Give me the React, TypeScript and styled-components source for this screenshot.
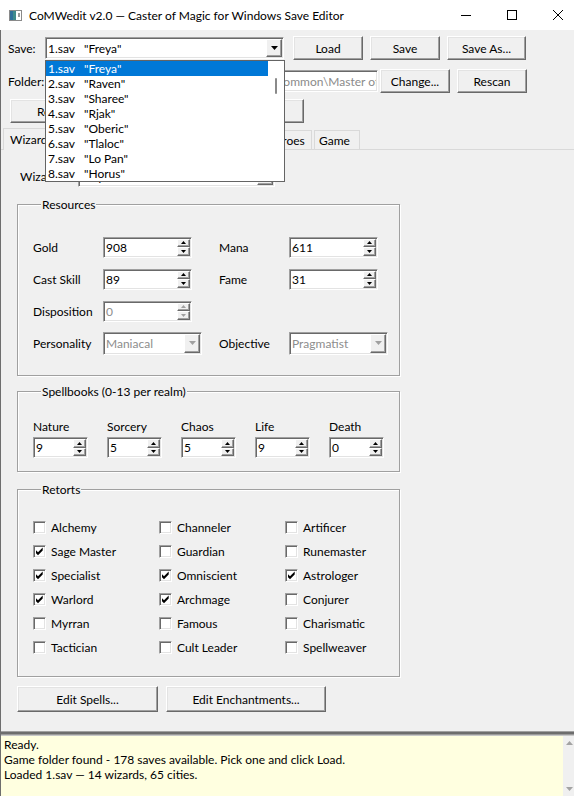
import styled, { createGlobalStyle } from "styled-components";

const UI_FONT = `Lato, "Liberation Sans", Arial, sans-serif`;

const GlobalStyle = createGlobalStyle`
  * { box-sizing: border-box; }
  html, body { margin: 0; padding: 0; }
  body {
    background: #f0f0f0;
    font-family: ${UI_FONT};
    font-size: 12px;
    color: #000;
    overflow: hidden;
  }
`;

const saves: [string, string][] = [
  ["1.sav", "Freya"],
  ["2.sav", "Raven"],
  ["3.sav", "Sharee"],
  ["4.sav", "Rjak"],
  ["5.sav", "Oberic"],
  ["6.sav", "Tlaloc"],
  ["7.sav", "Lo Pan"],
  ["8.sav", "Horus"],
];

const tabs: [string, number][] = [
  ["Wizards", 58],
  ["Cities", 46],
  ["Units", 42],
  ["Items", 42],
  ["Buildings", 59],
  ["Heroes", 50],
  ["Game", 46],
];

const realms: [string, number][] = [
  ["Nature", 9],
  ["Sorcery", 5],
  ["Chaos", 5],
  ["Life", 9],
  ["Death", 0],
];

const retorts: [string, boolean][] = [
  ["Alchemy", false], ["Channeler", false], ["Artificer", false],
  ["Sage Master", true], ["Guardian", false], ["Runemaster", false],
  ["Specialist", true], ["Omniscient", true], ["Astrologer", true],
  ["Warlord", true], ["Archmage", true], ["Conjurer", false],
  ["Myrran", false], ["Famous", false], ["Charismatic", false],
  ["Tactician", false], ["Cult Leader", false], ["Spellweaver", false],
];

const logLines = [
  "Ready.",
  "Game folder found - 178 saves available. Pick one and click Load.",
  "Loaded 1.sav — 14 wizards, 65 cities.",
];

/* small glyphs */

const ArrowUp = ({ color = "#000" }: { color?: string }) => (
  <svg width="5" height="3" viewBox="0 0 5 3">
    <path d="M0 3h5L2.5 0z" fill={color} />
  </svg>
);

const ArrowDown = ({ color = "#000", w = 5, h = 3 }: { color?: string; w?: number; h?: number }) => (
  <svg width={w} height={h} viewBox={`0 0 ${w} ${h}`}>
    <path d={`M0 0h${w}L${w / 2} ${h}z`} fill={color} />
  </svg>
);

const CheckMark = () => (
  <svg width="9" height="9" viewBox="0 0 9 9">
    <path d="M1 3.2l2 2 4.7-4.7v3L3 8.3 1 6.3z" fill="#000" />
  </svg>
);

const AppIcon = () => (
  <svg width="13" height="11" viewBox="0 0 13 11" style={{ marginLeft: 9 }}>
    <rect x="0.5" y="0.5" width="12" height="10" fill="#fff" stroke="#8a8a8a" />
    <rect x="1" y="1" width="6" height="9" fill="#3f8a8c" />
    <rect x="1" y="1" width="3" height="9" fill="#2f6f9a" />
    <rect x="9" y="3" width="2" height="4" fill="#9a9a9a" />
  </svg>
);

/* window frame */

const Window = styled.div`
  width: 574px;
  height: 796px;
  display: flex;
  flex-direction: column;
  overflow: hidden;
  background: #f0f0f0;
`;

const TitleBar = styled.div`
  height: 30px;
  flex-shrink: 0;
  display: flex;
  align-items: center;
  background: #fff;
`;

const Title = styled.span`
  margin-left: 7px;
  font-size: 12px;
  white-space: nowrap;
`;

const CaptionGroup = styled.div`
  margin-left: auto;
  margin-right: -7px;
  display: flex;
  flex-shrink: 0;
`;

const CaptionBtn = styled.div`
  width: 46px;
  height: 30px;
  display: flex;
  align-items: center;
  justify-content: center;
`;

const Body = styled.div`
  position: relative;
  flex: 1;
  display: flex;
  flex-direction: column;
  border-left: 1px solid #6e6e6e;
`;

/* toolbar rows */

const Toolbar = styled.div<{ $top: number; $left?: number }>`
  display: flex;
  align-items: center;
  height: 24px;
  margin-top: ${(p) => p.$top}px;
  padding-left: ${(p) => p.$left ?? 7}px;
`;

const FieldLabel = styled.span<{ $w: number }>`
  width: ${(p) => p.$w}px;
  flex-shrink: 0;
  white-space: nowrap;
`;

const ButtonGroup = styled.div<{ $gap: number; $left: number }>`
  display: flex;
  gap: ${(p) => p.$gap}px;
  margin-left: ${(p) => p.$left}px;
`;

const Button = styled.div<{ $w: number; $h?: number }>`
  width: ${(p) => p.$w}px;
  height: ${(p) => p.$h ?? 24}px;
  flex-shrink: 0;
  display: flex;
  align-items: center;
  justify-content: center;
  background: #f0f0f0;
  border: 1px solid;
  border-color: #fff #696969 #696969 #fff;
  box-shadow: inset -1px -1px 0 #a0a0a0, inset 1px 1px 0 #e3e3e3;
  white-space: nowrap;
`;

const Sunken = styled.div<{ $w: number; $h: number }>`
  width: ${(p) => p.$w}px;
  height: ${(p) => p.$h}px;
  flex-shrink: 0;
  display: flex;
  align-items: stretch;
  padding: 1px;
  background: #fff;
  border: 1px solid;
  border-color: #a0a0a0 #fff #fff #a0a0a0;
  box-shadow: inset 1px 1px 0 #696969, inset -1px -1px 0 #e3e3e3;
  overflow: hidden;
`;

const FieldText = styled.span<{ $muted?: boolean }>`
  flex: 1;
  display: flex;
  align-items: center;
  padding-left: 1px;
  white-space: nowrap;
  overflow: hidden;
  color: ${(p) => (p.$muted ? "#8d8d8d" : "#000")};
`;

const PathText = styled(FieldText)`
  padding-left: 3px;
  color: #8a8a8a;
`;

const SaveFile = styled.span`
  display: inline-block;
  width: 36px;
`;

const BevelBtn = styled.div<{ $w: number }>`
  width: ${(p) => p.$w}px;
  flex-shrink: 0;
  display: flex;
  align-items: center;
  justify-content: center;
  background: #f0f0f0;
  border: 1px solid;
  border-color: #fff #696969 #696969 #fff;
  box-shadow: inset -1px -1px 0 #a0a0a0;
`;

const SpinColumn = styled.div`
  width: 13px;
  display: flex;
  flex-direction: column;
`;

const SpinHalf = styled(BevelBtn)`
  flex: 1;
  width: 13px;
`;

/* dropdown list of the save combobox */

const DropList = styled.div`
  position: absolute;
  left: 44px;
  top: 30px;
  width: 240px;
  height: 122px;
  background: #fff;
  border: 1px solid #646464;
  display: flex;
  z-index: 5;
`;

const DropItems = styled.div`
  width: 222px;
`;

const DropItem = styled.div<{ $selected?: boolean }>`
  height: 15px;
  line-height: 15px;
  padding-left: 2px;
  white-space: nowrap;
  background: ${(p) => (p.$selected ? "#0078d7" : "transparent")};
  color: ${(p) => (p.$selected ? "#fff" : "#000")};
`;

const DropScroll = styled.div`
  flex: 1;
  display: flex;
  justify-content: center;
  padding-top: 17px;
`;

const DropThumb = styled.div`
  width: 2px;
  height: 16px;
  border-radius: 1px;
  background: #8a8a8a;
`;

/* notebook */

const TabStrip = styled.div`
  display: flex;
  align-items: flex-end;
  gap: 2px;
  height: 22px;
  margin-top: 5px;
  padding-left: 4px;
  border-bottom: 1px solid #d9d9d9;
`;

const Tab = styled.div<{ $w: number; $active?: boolean }>`
  width: ${(p) => p.$w + (p.$active ? 4 : 0)}px;
  height: ${(p) => (p.$active ? 22 : 19)}px;
  margin: ${(p) => (p.$active ? "0 -2px -1px -2px" : "0")};
  padding-left: ${(p) => (p.$active ? 6 : 4)}px;
  display: flex;
  align-items: center;
  background: #f0f0f0;
  border: 1px solid #d9d9d9;
  border-bottom: none;
  white-space: nowrap;
  overflow: hidden;
`;

const Panel = styled.div`
  display: flex;
  flex-direction: column;
  padding-left: 16px;
`;

const WizardRow = styled.div`
  display: flex;
  align-items: center;
  margin-top: 16px;
  padding-left: 3px;
`;

const Group = styled.fieldset<{ $top: number; $pt: number; $pb: number }>`
  width: 383px;
  margin: ${(p) => p.$top}px 0 0 0;
  padding: ${(p) => p.$pt}px 0 ${(p) => p.$pb}px 15px;
  border: 1px solid #a0a0a0;
  box-shadow: 1px 1px 0 #fff, inset 1px 1px 0 #fff;
  min-width: 0;
`;

const Legend = styled.legend`
  margin-left: 8px;
  padding: 0 1px;
  line-height: 15px;
  background: #f0f0f0;
`;

const ResourceGrid = styled.div`
  display: grid;
  grid-template-columns: 70px 116px 70px auto;
  grid-auto-rows: 22px;
  row-gap: 10px;
  align-items: center;
`;

const RealmRow = styled.div`
  display: flex;
  gap: 19px;
`;

const RealmCell = styled.div`
  width: 55px;
  display: flex;
  flex-direction: column;
  gap: 3px;
  line-height: 15px;
`;

const RetortGrid = styled.div`
  display: grid;
  grid-template-columns: repeat(3, 126px);
  grid-auto-rows: 24px;
`;

const Retort = styled.div`
  display: flex;
  align-items: center;
  gap: 5px;
`;

const CheckBox = styled.div`
  width: 13px;
  height: 13px;
  display: flex;
  align-items: center;
  justify-content: center;
  background: #fff;
  border: 1px solid;
  border-color: #a0a0a0 #fff #fff #a0a0a0;
  box-shadow: inset 1px 1px 0 #696969, inset -1px -1px 0 #e3e3e3;
`;

const ActionRow = styled.div`
  display: flex;
  gap: 8px;
  margin-top: 9px;
`;

/* log pane */

const LogPane = styled.div`
  margin-top: auto;
  height: 65px;
  flex-shrink: 0;
  display: flex;
  flex-direction: column;
`;

const Sash = styled.div`
  height: 5px;
  background: linear-gradient(#a0a0a0 0 1px, #6d6d6d 1px 3px, #9a9a9a 3px 4px, #c8c8c8 4px 5px);
`;

const LogBox = styled.div`
  flex: 1;
  display: flex;
  background: #ffffe0;
`;

const LogText = styled.div`
  flex: 1;
  padding: 1px 0 0 3px;
  line-height: 15px;
  white-space: nowrap;
`;

const LogScroll = styled.div`
  width: 11px;
  flex-shrink: 0;
  display: flex;
  flex-direction: column;
  justify-content: space-between;
  padding: 5px 0 5px 3px;
  background: #f0f0f0;
`;

/* widgets */

function Spin({ value, w = 89, disabled }: { value: number; w?: number; disabled?: boolean }) {
  const c = disabled ? "#a0a0a0" : "#000";
  return (
    <Sunken $w={w} $h={21}>
      <FieldText $muted={disabled}>{value}</FieldText>
      <SpinColumn>
        <SpinHalf $w={13}><ArrowUp color={c} /></SpinHalf>
        <SpinHalf $w={13}><ArrowDown color={c} /></SpinHalf>
      </SpinColumn>
    </Sunken>
  );
}

function Combo({ w, h = 21, children, disabled }: { w: number; h?: number; children: React.ReactNode; disabled?: boolean }) {
  return (
    <Sunken $w={w} $h={h}>
      <FieldText $muted={disabled}>{children}</FieldText>
      <BevelBtn $w={16}>
        <ArrowDown w={7} h={4} color={disabled ? "#a0a0a0" : "#000"} />
      </BevelBtn>
    </Sunken>
  );
}

export default function App() {
  return (
    <>
      <GlobalStyle />
      <Window>
        <TitleBar>
          <AppIcon />
          <Title>CoMWedit v2.0 — Caster of Magic for Windows Save Editor</Title>
          <CaptionGroup>
            <CaptionBtn>
              <svg width="10" height="10" viewBox="0 0 10 10">
                <path d="M0 5.5h10" stroke="#000" strokeWidth="1" />
              </svg>
            </CaptionBtn>
            <CaptionBtn>
              <svg width="10" height="10" viewBox="0 0 10 10">
                <rect x="0.5" y="0.5" width="9" height="9" fill="none" stroke="#000" />
              </svg>
            </CaptionBtn>
            <CaptionBtn>
              <svg width="10" height="10" viewBox="0 0 10 10">
                <path d="M0 0l10 10M10 0L0 10" stroke="#000" strokeWidth="1" />
              </svg>
            </CaptionBtn>
          </CaptionGroup>
        </TitleBar>

        <Body>
          <Toolbar $top={6}>
            <FieldLabel $w={37}>Save:</FieldLabel>
            <Combo w={239} h={22}>
              <SaveFile>1.sav</SaveFile>"Freya"
            </Combo>
            <ButtonGroup $gap={7} $left={9}>
              <Button $w={70}>Load</Button>
              <Button $w={70}>Save</Button>
              <Button $w={79}>Save As...</Button>
            </ButtonGroup>
          </Toolbar>

          <Toolbar $top={9}>
            <FieldLabel $w={40}>Folder:</FieldLabel>
            <Sunken $w={330} $h={22}>
              <PathText>C:\Program Files (x86)\Steam\SteamApps\common\Master of Magic</PathText>
            </Sunken>
            <ButtonGroup $gap={7} $left={2}>
              <Button $w={70}>Change...</Button>
              <Button $w={70}>Rescan</Button>
            </ButtonGroup>
          </Toolbar>

          <Toolbar $top={6} $left={9}>
            <ButtonGroup $gap={8} $left={0}>
              <Button $w={136}>Restore Backup</Button>
              <Button $w={150}>Open Backup Folder</Button>
            </ButtonGroup>
          </Toolbar>

          <TabStrip>
            {tabs.map(([name, w], i) => (
              <Tab key={name} $w={w} $active={i === 0}>{name}</Tab>
            ))}
          </TabStrip>

          <Panel>
            <WizardRow>
              <FieldLabel $w={58}>Wizard:</FieldLabel>
              <Combo w={197}>Freya</Combo>
            </WizardRow>

            <Group $top={10} $pt={24} $pb={21}>
              <Legend>Resources</Legend>
              <ResourceGrid>
                <span>Gold</span>
                <Spin value={908} />
                <span>Mana</span>
                <Spin value={611} />
                <span>Cast Skill</span>
                <Spin value={89} />
                <span>Fame</span>
                <Spin value={31} />
                <span>Disposition</span>
                <Spin value={0} disabled />
                <span />
                <span />
                <span>Personality</span>
                <Combo w={99} h={23} disabled>Maniacal</Combo>
                <span>Objective</span>
                <Combo w={99} h={23} disabled>Pragmatist</Combo>
              </ResourceGrid>
            </Group>

            <Group $top={8} $pt={20} $pb={13}>
              <Legend>Spellbooks (0-13 per realm)</Legend>
              <RealmRow>
                {realms.map(([name, n]) => (
                  <RealmCell key={name}>
                    <span>{name}</span>
                    <Spin value={n} w={55} />
                  </RealmCell>
                ))}
              </RealmRow>
            </Group>

            <Group $top={10} $pt={18} $pb={17}>
              <Legend>Retorts</Legend>
              <RetortGrid>
                {retorts.map(([name, on]) => (
                  <Retort key={name}>
                    <CheckBox>{on && <CheckMark />}</CheckBox>
                    <span>{name}</span>
                  </Retort>
                ))}
              </RetortGrid>
            </Group>

            <ActionRow>
              <Button $w={141} $h={26}>Edit Spells...</Button>
              <Button $w={160} $h={26}>Edit Enchantments...</Button>
            </ActionRow>
          </Panel>

          <LogPane>
            <Sash />
            <LogBox>
              <LogText>
                {logLines.map((l) => (
                  <div key={l}>{l}</div>
                ))}
              </LogText>
              <LogScroll>
                <svg width="7" height="4" viewBox="0 0 7 4"><path d="M0 4h7L3.5 0z" fill="#a3a3a3" /></svg>
                <svg width="7" height="4" viewBox="0 0 7 4"><path d="M0 0h7L3.5 4z" fill="#a3a3a3" /></svg>
              </LogScroll>
            </LogBox>
          </LogPane>

          <DropList>
            <DropItems>
              {saves.map(([file, name], i) => (
                <DropItem key={file} $selected={i === 0}>
                  <SaveFile>{file}</SaveFile>"{name}"
                </DropItem>
              ))}
            </DropItems>
            <DropScroll>
              <DropThumb />
            </DropScroll>
          </DropList>
        </Body>
      </Window>
    </>
  );
}
